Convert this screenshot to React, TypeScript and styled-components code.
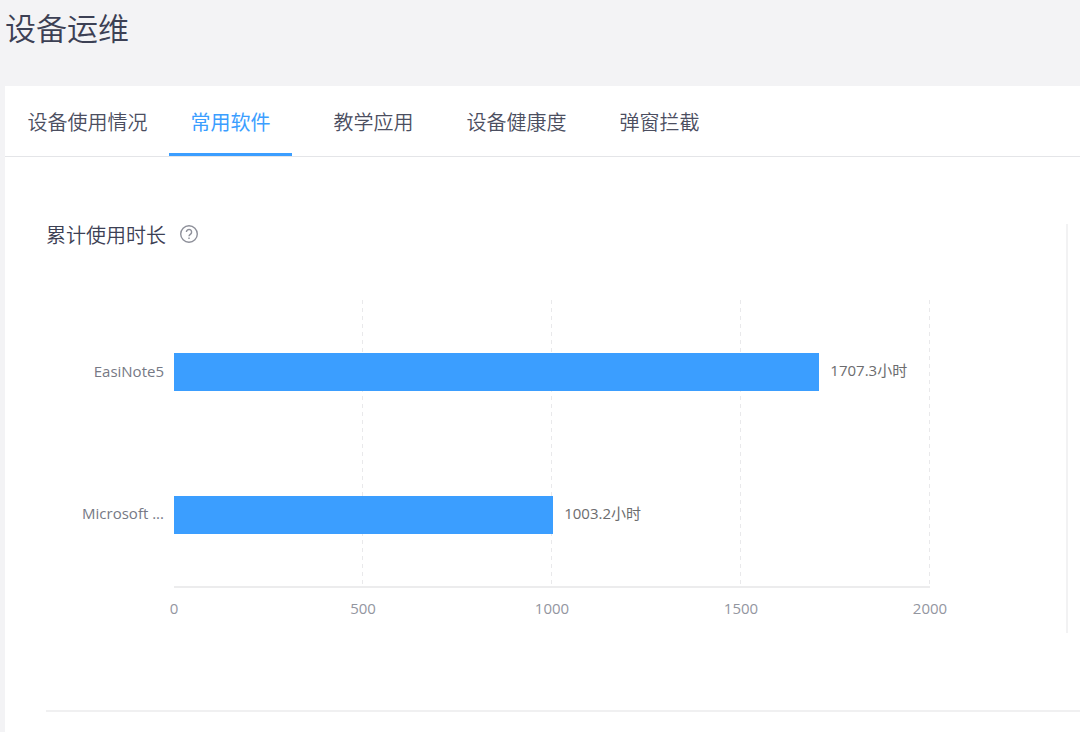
import React, { useState } from 'react';
import styled, { createGlobalStyle } from 'styled-components';

const GlobalStyle = createGlobalStyle`
  * {
    box-sizing: border-box;
  }
  body {
    margin: 0;
    background: #f3f3f5;
    color: #3c4054;
    font-family: 'Open Sans', 'Noto Sans CJK SC', sans-serif;
  }
`;

const Page = styled.main`
  display: flex;
  flex-direction: column;
  min-height: 100vh;
  padding-left: 5px;
`;

const PageTitle = styled.h1`
  margin: 0;
  padding: 5px 0 37px;
  font-family: 'Noto Sans CJK SC', sans-serif;
  font-size: 31px;
  line-height: 44px;
  font-weight: 350;
`;

const Card = styled.section`
  flex: 1;
  background: #fff;
`;

const TabBar = styled.div`
  display: flex;
  padding-left: 11px;
  border-bottom: 1px solid #e4e5e8;
`;

const Tab = styled.button<{ $active: boolean }>`
  flex: 0 0 143px;
  padding: 0 10px;
  border: 0;
  background: none;
  color: ${({ $active }) => ($active ? '#3b9eff' : '#4b4e5f')};
  font-family: 'Noto Sans CJK SC', sans-serif;
  font-size: 20px;
  font-weight: ${({ $active }) => ($active ? 400 : 350)};
  white-space: nowrap;
  cursor: pointer;
`;

const TabLabel = styled.span<{ $active: boolean }>`
  display: flex;
  justify-content: center;
  height: 70px;
  padding-top: 4px;
  line-height: 64px;
  border-bottom: 3px solid ${({ $active }) => ($active ? '#3b9eff' : 'transparent')};
`;

const Content = styled.div`
  margin-left: 41px;
  padding: 67px 0 77px;
  border-bottom: 2px solid #f0f0f1;
`;

const UsagePanel = styled.figure`
  margin: 0 12px 0 0;
  padding: 0 136px 15px 0;
  border-right: 2px solid #f2f2f3;
`;

const PanelTitle = styled.figcaption`
  display: flex;
  align-items: center;
  gap: 13px;
  height: 20px;
  margin-bottom: 56px;
  font-family: 'Noto Sans CJK SC', sans-serif;
  font-size: 20px;
  font-weight: 350;
`;

const HelpButton = styled.button`
  display: flex;
  padding: 0;
  border: 0;
  background: none;
  color: #8e909a;
  cursor: pointer;
`;

const Chart = styled.div`
  display: grid;
  grid-template-columns: 118px 1fr;
  column-gap: 10px;
  font-size: 15px;
  line-height: 20px;
`;

const Categories = styled.div`
  display: grid;
  grid-auto-rows: 1fr;
  align-items: center;
  justify-items: end;
  padding-bottom: 4px;
  color: #767985;
`;

const Plot = styled.div`
  display: grid;
  height: 288px;
  border-bottom: 2px solid #ececed;
`;

const GridLines = styled.div`
  display: grid;
  grid-template-columns: repeat(4, 1fr);
  grid-area: 1 / 1;
`;

const GridColumn = styled.div`
  background: repeating-linear-gradient(#e9e9eb 0 4px, transparent 4px 8px) right / 1px 100% no-repeat;
`;

const Bars = styled.div`
  display: grid;
  grid-auto-rows: 1fr;
  align-items: center;
  grid-area: 1 / 1;
`;

const BarRow = styled.div`
  display: flex;
  align-items: center;
  gap: 11px;
`;

const Bar = styled.div`
  height: 38px;
  background: #3b9eff;
`;

const BarValue = styled.span`
  padding-bottom: 4px;
  color: #6c6c6e;
  white-space: nowrap;
`;

const Axis = styled.div`
  display: flex;
  grid-column: 2;
  justify-content: space-between;
  padding-top: 10px;
  color: #93969f;
`;

const Tick = styled.span`
  display: flex;
  justify-content: center;
  width: 0;
`;

const tabs = ['设备使用情况', '常用软件', '教学应用', '设备健康度', '弹窗拦截'];
const ticks = [0, 500, 1000, 1500, 2000];
const maxHours = 2000;
const usage = [
  { name: 'EasiNote5', hours: 1707.3 },
  { name: 'Microsoft ...', hours: 1003.2 },
];

function HelpIcon() {
  return (
    <svg width="20" height="20" viewBox="0 0 20 20" fill="none" stroke="currentColor" strokeWidth="1.4" aria-hidden="true">
      <circle cx="10" cy="10" r="8.3" />
      <path d="M7.4 8.1a2.6 2.6 0 1 1 4.2 2c-.9.7-1.6 1.1-1.6 2.1" />
      <path d="M10 13.4v1.5" />
    </svg>
  );
}

export default function App() {
  const [active, setActive] = useState(1);

  return (
    <>
      <GlobalStyle />
      <Page>
        <PageTitle>设备运维</PageTitle>
        <Card>
          <TabBar role="tablist">
            {tabs.map((label, i) => (
              <Tab
                key={label}
                type="button"
                role="tab"
                aria-selected={i === active}
                $active={i === active}
                onClick={() => setActive(i)}
              >
                <TabLabel $active={i === active}>{label}</TabLabel>
              </Tab>
            ))}
          </TabBar>
          <Content role="tabpanel">
            <UsagePanel>
              <PanelTitle>
                累计使用时长
                <HelpButton type="button" aria-label="说明">
                  <HelpIcon />
                </HelpButton>
              </PanelTitle>
              <Chart>
                <Categories>
                  {usage.map(({ name }) => (
                    <span key={name}>{name}</span>
                  ))}
                </Categories>
                <Plot>
                  <GridLines>
                    {ticks.slice(1).map((tick) => (
                      <GridColumn key={tick} />
                    ))}
                  </GridLines>
                  <Bars>
                    {usage.map(({ name, hours }) => (
                      <BarRow key={name}>
                        <Bar style={{ width: `${(hours / maxHours) * 100}%` }} />
                        <BarValue>{hours}小时</BarValue>
                      </BarRow>
                    ))}
                  </Bars>
                </Plot>
                <Axis>
                  {ticks.map((tick) => (
                    <Tick key={tick}>{tick}</Tick>
                  ))}
                </Axis>
              </Chart>
            </UsagePanel>
          </Content>
        </Card>
      </Page>
    </>
  );
}
